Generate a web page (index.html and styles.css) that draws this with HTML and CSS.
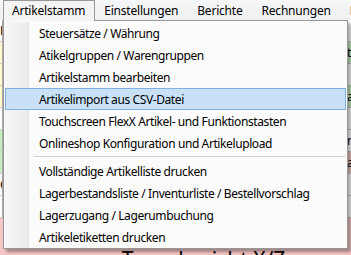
FILE: index.html
```html
<!DOCTYPE html>
<html lang="de">
<head>
    <meta charset="UTF-8">
    <title>Artikelstamm Menü</title>
    <link rel="stylesheet" href="styles.css">
</head>
<body>
    <div class="menubar">
        <div class="menu-item open">Artikelstamm</div>
        <div class="menu-item">Einstellungen</div>
        <div class="menu-item">Berichte</div>
        <div class="menu-item">Rechnungen</div>
        <div class="menu-item">Belege</div>
    </div>

    <div class="workspace">
        <div class="row">
            <div class="cell left">Preise</div><div class="cell mid"></div><div class="cell right"></div>
        </div>
        <div class="row">
            <div class="cell left yellow"></div><div class="cell mid"></div><div class="cell right green">text</div>
        </div>
        <div class="row">
            <div class="cell left yellow"></div><div class="cell mid"></div><div class="cell right"></div>
        </div>
        <div class="row">
            <div class="cell left yellow"></div><div class="cell mid"></div><div class="cell right green">aus</div>
        </div>
        <div class="row">
            <div class="cell left"></div><div class="cell mid"></div><div class="cell right"></div>
        </div>
        <div class="row">
            <div class="cell left green"></div><div class="cell mid"></div><div class="cell right">rest</div>
        </div>
        <div class="row">
            <div class="cell left green"></div><div class="cell mid"></div><div class="cell right pink">abs</div>
        </div>
        <div class="row">
            <div class="cell left">Gesamt</div><div class="cell mid"></div><div class="cell right"></div>
        </div>
        <div class="row">
            <div class="cell left"></div><div class="cell mid"></div><div class="cell right"></div>
        </div>
        <div class="report">
            <span class="report-title">Tagesbericht X/Z</span>
        </div>

        <div class="dropdown">
            <div class="gutter"></div>
            <div class="entry">Steuersätze / Währung</div>
            <div class="entry">Atikelgruppen / Warengruppen</div>
            <div class="entry">Artikelstamm bearbeiten</div>
            <div class="entry active">Artikelimport aus CSV-Datei</div>
            <div class="entry">Touchscreen FlexX Artikel- und Funktionstasten</div>
            <div class="entry">Onlineshop Konfiguration und Artikelupload</div>
            <div class="separator"></div>
            <div class="entry">Vollständige Artikelliste drucken</div>
            <div class="entry">Lagerbestandsliste / Inventurliste / Bestellvorschlag</div>
            <div class="entry">Lagerzugang / Lagerumbuchung</div>
            <div class="entry">Artikeletiketten drucken</div>
        </div>
    </div>
</body>
</html>
```

FILE: styles.css
```css
body {
    margin: 0;
    font-family: "Noto Sans", "DejaVu Sans", sans-serif;
    font-size: 12px;
    letter-spacing: -0.4px;
    color: #000;
    background: #fff;
    width: 351px;
    height: 255px;
    overflow: hidden;
}
.menubar {
    display: flex;
    height: 20px;
    padding-left: 3px;
    background: linear-gradient(#f5f6f7, #eef0f2);
    white-space: nowrap;
    letter-spacing: -0.2px;
}
.menu-item {
    padding: 0 9px 0 8px;
    line-height: 19px;
    border: 1px solid transparent;
    border-bottom: none;
}
.menu-item.open {
    background: #f4f4f4;
    border-color: #979797;
    height: 20px;
    position: relative;
    z-index: 2;
}
.workspace {
    position: relative;
    height: 235px;
}
.row {
    display: grid;
    grid-template-columns: 3px 1fr 5px;
    height: 22px;
}
.cell {
    border-bottom: 1px solid #c9c9c9;
    line-height: 22px;
    white-space: nowrap;
    overflow: hidden;
}
.cell.left {
    text-align: right;
    border-right: 1px solid #a9a9a9;
}
.cell.right {
    border-left: 1px solid #a9a9a9;
}
.yellow { background: #fff9cc; }
.green { background: #c6efc0; }
.pink { background: #f4c7c3; }
.report {
    background: #f6c6c4;
    height: 37px;
    text-align: center;
    overflow: hidden;
}
.report-title {
    display: inline-block;
    font-size: 21px;
    letter-spacing: 0;
    line-height: 22px;
    padding-top: 30px;
    padding-left: 56px;
}
.dropdown {
    position: absolute;
    left: 3px;
    top: 0;
    width: 341px;
    padding: 1px 1px 0;
    background: #fbfbfb;
    border: 1px solid #979797;
    box-shadow: 3px 3px 3px rgba(0, 0, 0, 0.35);
    white-space: nowrap;
}
.gutter {
    position: absolute;
    left: 1px;
    top: 1px;
    bottom: 0;
    width: 23px;
    background: linear-gradient(to right, #f6f6f6, #ececec);
    border-right: 1px solid #e2e3e3;
}
.entry {
    position: relative;
    height: 20px;
    line-height: 21px;
    padding-left: 33px;
    border: 1px solid transparent;
}
.entry.active {
    background: #c9e1f7;
    border-color: #7fb2e2;
}
.separator {
    position: relative;
    height: 6px;
    margin-left: 29px;
    margin-right: 1px;
}
.separator::after {
    content: "";
    position: absolute;
    left: 0;
    right: 0;
    top: 2px;
    border-top: 1px solid #cfcfcf;
    border-bottom: 1px solid #fff;
}
```
